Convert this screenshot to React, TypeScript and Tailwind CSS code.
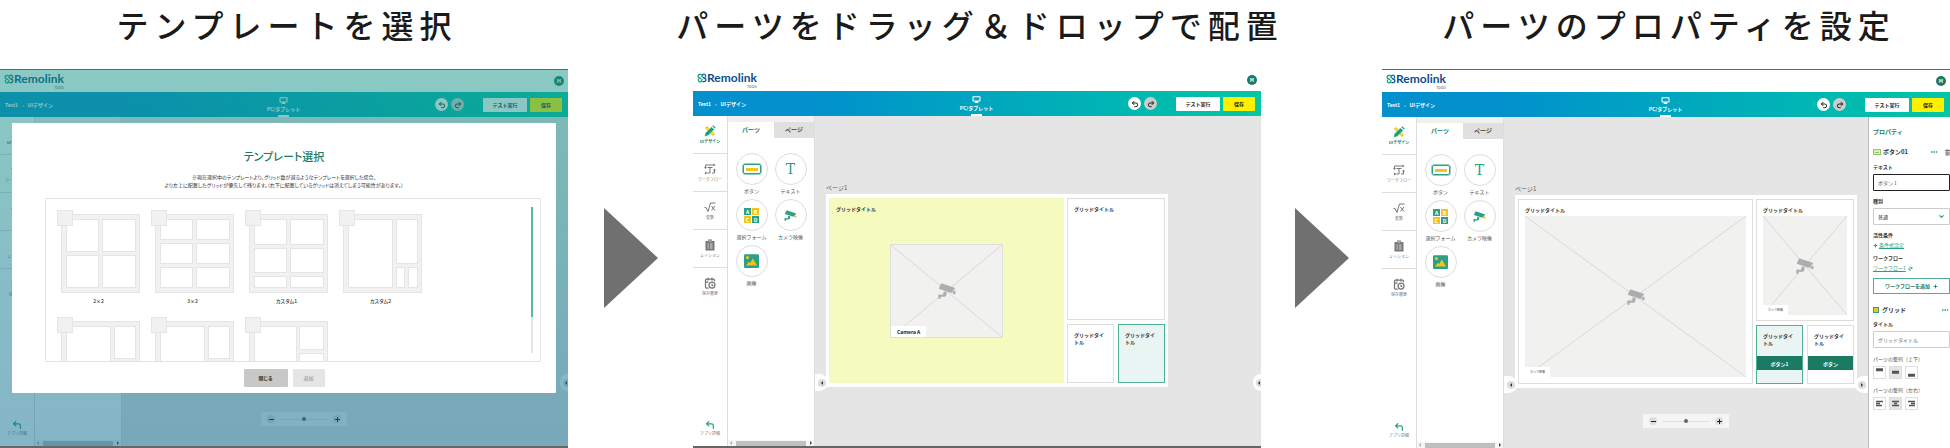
import type { ReactNode } from 'react'
import { CalendarClock, ChevronDown, CornerUpLeft, Ellipsis, Plus, Redo2, Undo2 } from 'lucide-react'

function LogoMark() {
  return (
    <svg viewBox="0 0 24 24" className="h-[10px] w-[10px]" fill="none" strokeWidth="3.2" strokeLinecap="round">
      <path d="M10 3.5H6.5a4 4 0 0 0-3 6.5L9 13.5" stroke="#12a07c" />
      <path d="M3.5 15v2.5a4 4 0 0 0 6.5 3l2-5" stroke="#12a07c" />
      <path d="M14 20.5h3.5a4 4 0 0 0 3-6.5L15 10.5" stroke="#0b4f9c" />
      <path d="M20.5 9V6.5a4 4 0 0 0-6.5-3l-2 5" stroke="#0c6a96" />
    </svg>
  )
}

function CameraIcon({ className, lens = 'currentColor' }: { className: string; lens?: string }) {
  return (
    <svg viewBox="0 0 56 50" className={className} fill="currentColor">
      <path d="M10 1 54 16 42 31 2 18z" />
      <path d="m46 29 4-6 5 4-1 9-9-3z" fill={lens} />
      <path d="m18 26 10 4-3 9q-1 4-5 4H8v6H1V36h7v1h8z" />
    </svg>
  )
}

function MonitorIcon() {
  return (
    <svg viewBox="0 0 24 20" className="h-[7px] w-[9px]" fill="none" stroke="white" strokeWidth="3">
      <rect x="2" y="2" width="20" height="12" rx="1" />
      <path d="M7 18h10M12 14v4" strokeWidth="4" />
    </svg>
  )
}

function DesignIcon() {
  return (
    <svg viewBox="0 0 24 24" className="h-3 w-3">
      <path d="m2 6 4-4 16 16-4 4z" fill="#f2c41c" />
      <path d="m6 8 2-2M16 18l2-2M9 11l1-1" stroke="white" strokeWidth="1.4" />
      <path d="m1 23 1.5-7L15 3.5l5.5 5.5L8 21.5z" fill="#1f9f78" stroke="white" strokeWidth="1" />
      <path d="m16.5 2 2-1.5 5 5-1.5 2z" fill="#1f9f78" />
    </svg>
  )
}

function FlowIcon() {
  return (
    <svg viewBox="0 0 24 24" className="h-3 w-3" fill="none" stroke="currentColor" strokeWidth="2">
      <path d="M3 9V4h17M7 9h10M12 9v11M7 20h5M16 20h5v-6" />
      <path d="m19 1 4 3-4 3zM0 8h6l-3 4zM2 17l5 3-5 3zM18 15h6l-3-4z" fill="currentColor" strokeWidth="0" />
    </svg>
  )
}

function RootIcon() {
  return (
    <svg viewBox="0 0 24 24" className="h-3 w-3" fill="none" stroke="currentColor" strokeWidth="2">
      <path d="M1 13h3l4 8 5-17h10" />
      <path d="m15 10 7 9M22 10l-7 9" />
    </svg>
  )
}

function ClipboardIcon() {
  return (
    <svg viewBox="0 0 24 24" className="h-3 w-3" fill="currentColor">
      <path d="M4 4h4V1h8v3h4q1 0 1 1v17q0 1-1 1H4q-1 0-1-1V5q0-1 1-1z" />
      <path d="M9 4h6M7 10h3M12 10h5M7 14h3M12 14h5M7 18h3M12 18h5" stroke="white" strokeWidth="1.5" />
    </svg>
  )
}

function TrashIcon() {
  return (
    <svg viewBox="0 0 10 12" className="h-[7px] w-[5px]" fill="#777">
      <path d="M0 1h3V0h4v1h3v2H0zM1 4h8v8H1z" />
      <path d="M3.5 5v6M6.5 5v6" stroke="white" strokeWidth="0.8" />
    </svg>
  )
}

function ButtonIcon() {
  return (
    <span className="flex h-[10px] w-[18px] items-center justify-center rounded-[2px] border border-[#2ba084] outline outline-[#2ba084]/50">
      <span className="h-[3px] w-3 bg-[#f2c41c]" />
    </span>
  )
}

function ChoiceIcon() {
  return (
    <span className="grid grid-cols-2 gap-[1px] text-center text-[5px] leading-[7px] font-bold text-white">
      <span className="h-[7px] w-[7px] bg-[#2ba084]">A</span>
      <span className="h-[7px] w-[7px] bg-[#f2c41c]">B</span>
      <span className="h-[7px] w-[7px] bg-[#f2c41c]">C</span>
      <span className="h-[7px] w-[7px] bg-[#2ba084]">D</span>
    </span>
  )
}

function ImageIcon() {
  return (
    <svg viewBox="0 0 24 22" className="h-[14px] w-[15px]">
      <rect width="24" height="22" rx="2" fill="#2ba084" />
      <circle cx="5.5" cy="5.5" r="2.5" fill="#f2c41c" />
      <path d="m3 18 5-6 2 2 4-7 7 11z" fill="#f2c41c" />
    </svg>
  )
}

const navItems = [
  { label: 'UIデザイン', icon: <DesignIcon />, active: true },
  { label: 'ワークフロー', icon: <FlowIcon /> },
  { label: '変数', icon: <RootIcon /> },
  { label: 'ミッション', icon: <ClipboardIcon /> },
  { label: '保存履歴', icon: <CalendarClock className="h-3 w-3" strokeWidth={2.5} /> },
]

const parts = [
  { label: 'ボタン', icon: <ButtonIcon /> },
  { label: 'テキスト', icon: <span className="font-['DejaVu_Serif',serif] text-[14px] leading-4 text-[#2ba084]">T</span> },
  { label: '選択フォーム', icon: <ChoiceIcon /> },
  { label: 'カメラ映像', icon: <CameraIcon className="h-[11px] w-[13px] text-[#2ba084]" lens="#f2c41c" /> },
  { label: '画像', icon: <ImageIcon /> },
]

function TopBar() {
  return (
    <>
      <header className="flex h-[22px] shrink-0 items-center justify-between bg-white px-1">
        <div className="flex flex-col items-end">
          <div className="flex items-center">
            <LogoMark />
            <span className="font-[Lato,sans-serif] text-[12px] leading-3 font-bold text-[#0c4f8c]">Remolink</span>
          </div>
          <span className="text-[4px] leading-1 text-gray-500">Tools</span>
        </div>
        <span className="flex h-[10px] w-[10px] items-center justify-center rounded-full bg-[#1b7a62] text-[5px] font-bold text-white">M</span>
      </header>
      <div className="grid h-[25px] shrink-0 grid-cols-[1fr_auto_1fr] items-center bg-linear-to-r from-[#0490cd] from-20% to-[#06c6a3] pr-[6px] pl-[5px] text-[5px] leading-[6px] font-bold text-white">
        <nav className="flex gap-1">
          <a href="#">Test1</a>
          <span className="font-normal">›</span>
          <a href="#">UIデザイン</a>
        </nav>
        <button className="flex h-full flex-col items-center pt-[5px]">
          <MonitorIcon />
          <span className="mt-[2px]">PC/タブレット</span>
          <span className="mt-auto h-[2px] w-[11px] bg-white" />
        </button>
        <div className="flex items-center justify-end text-[#222]">
          <button aria-label="元に戻す" className="flex h-[13px] w-[13px] items-center justify-center rounded-full bg-white">
            <Undo2 className="h-2 w-2" strokeWidth={3} />
          </button>
          <button aria-label="やり直す" className="ml-[3px] flex h-[13px] w-[13px] items-center justify-center rounded-full bg-[#ccc]">
            <Redo2 className="h-2 w-2" strokeWidth={3} />
          </button>
          <button className="ml-[19px] h-[14px] w-11 rounded-[1px] bg-white">テスト実行</button>
          <button className="ml-[3px] h-[14px] w-8 rounded-[1px] bg-[#fff000]">保存</button>
        </div>
      </div>
    </>
  )
}

function SideNav() {
  return (
    <nav className="flex w-[35px] shrink-0 flex-col border-r border-[#ddd] bg-white text-[4px] leading-[6px] text-[#777]">
      {navItems.map(item => (
        <a
          key={item.label}
          href="#"
          className={`flex h-[38px] flex-col items-center gap-[1px] border-b border-[#ddd] pt-[9px] last-of-type:border-0 ${item.active ? 'font-bold text-[#1b7a62]' : ''}`}
        >
          {item.icon}
          <span>{item.label}</span>
        </a>
      ))}
      <button className="mt-auto flex flex-col items-center pb-[10px]">
        <CornerUpLeft className="h-[10px] w-[10px] text-[#2ba084]" strokeWidth={3} />
        <span>アプリ詳細</span>
      </button>
    </nav>
  )
}

function PartsPanel() {
  return (
    <aside className="flex w-[87px] shrink-0 flex-col border-r border-[#ddd] bg-white">
      <div className="grid grid-cols-[46px_1fr] bg-[#f0f0f0] pt-[6px] text-[6px] leading-4 font-bold">
        <button className="bg-white text-[#1b7a62]">パーツ</button>
        <button className="bg-[#e0e0e0] text-[#444]">ページ</button>
      </div>
      <div className="grid grid-cols-2 gap-y-[5px] px-1 pt-[15px] text-[5px] leading-[6px] text-[#555]">
        {parts.map(part => (
          <button key={part.label} className="flex flex-col items-center gap-[3px] whitespace-nowrap">
            <span className="flex h-8 w-8 items-center justify-center rounded-full border border-[#ddd]">{part.icon}</span>
            <span>{part.label}</span>
          </button>
        ))}
      </div>
      <div className="mt-auto flex h-[6px] items-center justify-between gap-1 bg-[#f5f5f5] px-[2px]">
        <span className="border-y-2 border-r-2 border-y-transparent border-r-[#aaa]" />
        <span className="h-[5px] flex-1 bg-[#bfbfbf]" />
        <span className="border-y-2 border-l-2 border-y-transparent border-l-[#444]" />
      </div>
    </aside>
  )
}

function LeftHandle() {
  return (
    <button aria-label="パーツを閉じる" className="absolute bottom-[55px] left-0 flex h-[17px] w-[13px] items-center justify-center rounded-r-full bg-white">
      <span className="flex h-2 w-2 items-center justify-center rounded-full bg-[#ddd]">
        <span className="border-y-2 border-r-2 border-y-transparent border-r-[#333]" />
      </span>
    </button>
  )
}

function RightHandle({ open }: { open?: boolean }) {
  return (
    <button
      aria-label="プロパティを開閉"
      className={`absolute right-0 bottom-[55px] flex h-[17px] items-center rounded-l-full bg-white ${open ? 'w-[13px] justify-center' : 'w-2 justify-end'}`}
    >
      <span className={`flex h-2 items-center justify-center bg-[#ddd] ${open ? 'w-2 rounded-full' : 'w-[5px] rounded-l-full'}`}>
        <span
          className={open ? 'border-y-2 border-l-2 border-y-transparent border-l-[#333]' : 'border-y-2 border-r-2 border-y-transparent border-r-[#333]'}
        />
      </span>
    </button>
  )
}

function ZoomControl() {
  return (
    <div className="absolute bottom-5 left-[139px] flex h-[14px] w-[86px] items-center justify-between bg-[#f5f5f5] px-[6px] text-[#222]">
      <button aria-label="縮小" className="flex h-2 w-2 items-center justify-center rounded-full bg-[#ddd]">
        <span className="h-[1px] w-[5px] bg-[#222]" />
      </button>
      <input
        type="range"
        aria-label="拡大率"
        defaultValue={50}
        className="h-[1px] w-12 appearance-none bg-[#e2e2e2] [&::-webkit-slider-thumb]:h-1 [&::-webkit-slider-thumb]:w-1 [&::-webkit-slider-thumb]:appearance-none [&::-webkit-slider-thumb]:rounded-full [&::-webkit-slider-thumb]:bg-[#666]"
      />
      <button aria-label="拡大" className="flex h-2 w-2 items-center justify-center rounded-full bg-[#ddd]">
        <svg viewBox="0 0 5 5" className="h-[5px] w-[5px]" stroke="#222">
          <path d="M2.5 0v5M0 2.5h5" />
        </svg>
      </button>
    </div>
  )
}

type EditorProps = {
  frame: string
  canvas?: ReactNode
  zoom?: boolean
  properties?: ReactNode
  children?: ReactNode
}

function Editor({ frame, canvas, zoom, properties, children }: EditorProps) {
  return (
    <section className={`relative flex flex-1 flex-col overflow-hidden border-[#666] ${frame}`}>
      <TopBar />
      <div className="flex flex-1">
        <SideNav />
        <PartsPanel />
        <main className="relative min-w-0 flex-1 bg-[#e5e5e5] px-[11px] pt-[68px]">
          {canvas}
          <LeftHandle />
          <RightHandle open={!!properties} />
          {zoom && <ZoomControl />}
        </main>
        {properties}
      </div>
      {children}
    </section>
  )
}

function Placeholder({ className, label }: { className: string; label: ReactNode }) {
  return (
    <div className={`relative flex items-center justify-center bg-[#f1f1f0] ${className}`}>
      <svg viewBox="0 0 100 100" preserveAspectRatio="none" className="absolute inset-0 h-full w-full" stroke="#d8d8d8">
        <path d="M0 0 100 100M100 0 0 100" vectorEffect="non-scaling-stroke" />
      </svg>
      <CameraIcon className="relative h-4 w-[18px] text-[#adadad]" />
      {label}
    </div>
  )
}

function Cell({ className = 'border-[#ddd] bg-white', children }: { className?: string; children?: ReactNode }) {
  return (
    <div className={`flex flex-col border p-[6px] ${className}`}>
      <p>グリッドタイトル</p>
      {children}
    </div>
  )
}

function Page({ children }: { children: ReactNode }) {
  return (
    <>
      <p className="text-[6px] leading-[8px] text-[#555]">ページ1</p>
      <div className="mt-[2px] grid h-[193px] w-[342px] max-w-full grid-cols-[235px_1fr] gap-[3px] bg-white px-[3px] py-1 text-[5px] leading-[7px] font-bold text-[#333]">
        {children}
      </div>
    </>
  )
}

function DragPage() {
  return (
    <Page>
      <div className="relative flex items-center justify-center bg-[#f5fbbf]">
        <p className="absolute top-[7px] left-[7px]">グリッドタイトル</p>
        <Placeholder
          className="h-[94px] w-[113px] border border-[#dededa]"
          label={<span className="absolute bottom-0 left-0 bg-white px-[6px] py-[2px] text-[#222]">Camera A</span>}
        />
      </div>
      <div className="grid grid-cols-2 grid-rows-[1fr_59px] gap-1">
        <div className="col-span-2 grid">
          <Cell />
        </div>
        <Cell />
        <Cell className="border-[#4fb094] bg-[#e8f5f3]" />
      </div>
    </Page>
  )
}

function CameraLabel() {
  return <span className="absolute bottom-0 left-0 bg-white px-[5px] py-[2px] text-[3px] leading-[6px] font-normal text-[#555]">カメラ映像</span>
}

function PropertyPage() {
  return (
    <Page>
      <Cell>
        <Placeholder className="mt-[3px] flex-1" label={<CameraLabel />} />
      </Cell>
      <div className="grid grid-cols-2 grid-rows-[1fr_59px] gap-1">
        <div className="col-span-2 grid">
          <Cell>
            <Placeholder className="mt-[3px] mb-[-1px] flex-1" label={<CameraLabel />} />
          </Cell>
        </div>
        <Cell className="border-[#4fb094] bg-[#e8f5f3]">
          <button className="-mx-[6px] mt-[10px] h-[14px] bg-[#1b7a62] text-white">ボタン1</button>
        </Cell>
        <Cell>
          <button className="-mx-[6px] mt-[10px] h-[14px] bg-[#1b7a62] text-white">ボタン</button>
        </Cell>
      </div>
    </Page>
  )
}

function AlignButtons({ label, paths }: { label: string; paths: string[] }) {
  return (
    <div className="flex flex-col gap-1 whitespace-nowrap">
      <p className="text-[#555]">{label}</p>
      <div className="flex gap-[3px]">
        {paths.map((d, i) => (
          <button
            key={d}
            aria-label={`${label} ${i + 1}`}
            className={`flex h-[13px] w-[13px] items-center justify-center border border-[#ddd] ${i === 1 ? 'bg-[#e5e5e5]' : 'bg-white'}`}
          >
            <svg viewBox="0 0 9 9" className="h-[9px] w-[9px]" stroke="#555" strokeWidth="1.4">
              <path d={d} />
            </svg>
          </button>
        ))}
      </div>
    </div>
  )
}

function Properties() {
  return (
    <aside className="flex w-[82px] shrink-0 flex-col border-l border-[#bbb] bg-white pt-[11px] pl-1 text-[5px] leading-[6px] text-[#333]">
      <h2 className="text-[6px] leading-[8px] font-bold text-[#1b7a62]">プロパティ</h2>
      <div className="mt-3 flex items-center gap-[2px]">
        <span className="flex h-[6px] w-2 items-center justify-center border border-[#8cc76a] bg-[#e4f0b0]">
          <span className="h-[1px] w-1 bg-[#8cc76a]" />
        </span>
        <h3 className="text-[6px] leading-[8px] font-bold">ボタン01</h3>
        <button aria-label="ボタン01のメニュー" className="ml-auto text-[#2ba084]">
          <Ellipsis className="h-2 w-2" strokeWidth={3} />
        </button>
        <button aria-label="削除" className="ml-[5px]">
          <TrashIcon />
        </button>
      </div>
      <div className="mt-2 flex flex-col gap-[7px]">
        <label className="flex flex-col gap-1 font-bold">
          テキスト
          <input defaultValue="ボタン 1" className="h-[17px] w-full rounded-[1px] border border-[#222] px-1 font-normal text-[#555]" />
        </label>
        <label className="relative flex flex-col gap-1 font-bold">
          種別
          <select className="h-[17px] w-full appearance-none rounded-[1px] border border-[#ccc] px-1 font-normal">
            <option>普通</option>
          </select>
          <ChevronDown className="absolute right-[5px] bottom-[5px] h-[7px] w-[7px] text-[#2ba084]" strokeWidth={4} />
        </label>
        <div className="flex flex-col gap-1">
          <p className="font-bold">活性条件</p>
          <p className="flex items-center gap-[1px] text-[#2ba084]">
            <Plus className="h-[5px] w-[5px]" strokeWidth={5} />
            <a href="#" className="underline">条件式設定</a>
          </p>
        </div>
        <div className="flex flex-col gap-1">
          <p className="font-bold">ワークフロー</p>
          <p className="flex items-center gap-[2px] text-[#2ba084]">
            <a href="#" className="underline">ワークフロー1</a>
            <Redo2 className="h-[5px] w-[5px]" strokeWidth={4} />
          </p>
        </div>
        <button className="flex h-4 items-center justify-center gap-[3px] border border-[#4fb094] font-bold text-[#1b7a62]">
          ワークフローを追加
          <Plus className="h-[5px] w-[5px]" strokeWidth={4} />
        </button>
      </div>
      <div className="mt-3 flex items-center gap-[3px] pr-[1px]">
        <span className="h-[6px] w-[6px] border border-[#2ba084] bg-[#f2c41c]" />
        <h3 className="text-[6px] leading-[8px] font-bold">グリッド</h3>
        <button aria-label="グリッドのメニュー" className="ml-auto text-[#2ba084]">
          <Ellipsis className="h-2 w-2" strokeWidth={3} />
        </button>
      </div>
      <div className="mt-[7px] flex flex-col gap-2">
        <label className="flex flex-col gap-1 font-bold">
          タイトル
          <input placeholder="グリッドタイトル" className="h-[17px] w-full rounded-[1px] border border-[#ccc] px-1 font-normal placeholder:text-[#666]" />
        </label>
        <AlignButtons label="パーツの整列（上下）" paths={['M1 1h7M1 2.5h7', 'M1 3.5h7M1 5h7', 'M1 6.5h7M1 8h7']} />
        <AlignButtons
          label="パーツの整列（左右）"
          paths={['M1 2.5h7M1 4.5h4M1 6.5h6', 'M1 2.5h7M3 4.5h3M1 6.5h7', 'M1 2.5h7M4 4.5h4M2 6.5h6']}
        />
      </div>
    </aside>
  )
}

// each cell is [x, y, width, height] inside the 83px thumbnail
type Rect = [number, number, number, number]

const templates: { id: number; name?: string; cells: Rect[] }[] = [
  { id: 1, name: '2×2', cells: [[9, 9, 32, 32], [45, 9, 33, 32], [9, 45, 32, 32], [45, 45, 33, 32]] },
  { id: 2, name: '3×2', cells: [[9, 9, 32, 20], [45, 9, 33, 20], [9, 33, 32, 20], [45, 33, 33, 20], [9, 57, 32, 20], [45, 57, 33, 20]] },
  { id: 3, name: 'カスタム1', cells: [[9, 9, 32, 25], [45, 9, 33, 25], [9, 38, 32, 24], [45, 38, 33, 24], [9, 66, 32, 11], [45, 66, 33, 11]] },
  { id: 4, name: 'カスタム2', cells: [[9, 9, 44, 68], [57, 9, 21, 44], [57, 57, 8, 20], [69, 57, 9, 20]] },
  { id: 5, cells: [[9, 9, 44, 68], [57, 9, 21, 32], [57, 45, 21, 32]] },
  { id: 6, cells: [[9, 9, 44, 68], [57, 9, 21, 32], [57, 45, 21, 32]] },
  { id: 7, cells: [[9, 9, 42, 68], [54, 9, 24, 23], [54, 36, 24, 41]] },
]

function TemplateModal() {
  return (
    <div className="absolute inset-0 flex bg-linear-to-b from-[#179387]/50 to-[#0b6b8f]/50 px-3 py-[53px]">
      <div role="dialog" aria-label="テンプレート選択" className="flex flex-1 flex-col rounded-[1px] bg-white pt-[25px] pb-[6px] text-center [font-feature-settings:'palt']">
        <h2 className="text-[11px] leading-4 font-medium text-[#1b7a62]">テンプレート選択</h2>
        <p className="mt-[9px] text-[5px] leading-[8px] text-[#333]">
          ※現在選択中のテンプレートより、グリッド数が減るようなテンプレートを選択した場合、
          <br />
          より左上に配置したグリッドが優先して残ります。（右下に配置しているグリッドは消えてしまう可能性があります。）
        </p>
        <div className="mt-[9px] mr-[15px] ml-[33px] flex min-h-0 flex-1 justify-between overflow-hidden rounded-[1px] border border-[#e2e2e2] pr-[7px] pl-[11px]">
          <div className="grid h-fit grid-cols-4 gap-x-[11px] gap-y-3 pt-[11px]">
            {templates.map(t => (
              <button key={t.id} aria-label={t.name ?? `テンプレート${t.id}`} className="flex flex-col items-center gap-1">
                <svg viewBox="0 0 83 83" className="h-[83px] w-[83px]" fill="#f1f1f1" stroke="#e5e5e5">
                  <rect x="4.5" y="4.5" width="78" height="78" />
                  {t.cells.map(([x, y, w, h]) => (
                    <rect key={`${x}-${y}`} x={x + 0.5} y={y + 0.5} width={w} height={h} fill="white" />
                  ))}
                  <rect x="0.5" y="0.5" width="15" height="15" />
                </svg>
                {t.name && <span className="text-[5px] leading-[8px] font-medium text-[#333]">{t.name}</span>}
              </button>
            ))}
          </div>
          <div className="my-2 w-[2px] bg-[#e5e5e5]">
            <div className="h-3/4 bg-[#5cb8a0]" />
          </div>
        </div>
        <div className="mt-[7px] flex justify-center gap-[5px] text-[5px] font-bold">
          <button className="h-[18px] w-11 rounded-[1px] bg-[#c8c8c8] text-[#333]">閉じる</button>
          <button disabled className="h-[18px] w-8 rounded-[1px] bg-[#e5e5e5] text-[#aaa]">追加</button>
        </div>
      </div>
    </div>
  )
}

function Step({ title, children }: { title: string; children: ReactNode }) {
  return (
    <div className="flex min-w-0 flex-col">
      <h1 className="flex h-[69px] shrink-0 justify-center pl-[6px] text-[32px] leading-[48px] font-medium tracking-[6px] whitespace-nowrap text-[#1a1a1a]">{title}</h1>
      {children}
    </div>
  )
}

function Arrow() {
  return (
    <div className="flex items-center justify-center pt-[68px]">
      <svg viewBox="0 0 54 100" className="h-[100px] w-[54px]" fill="#707070">
        <path d="M0 0 54 50 0 100z" />
      </svg>
    </div>
  )
}

export default function App() {
  return (
    <div className="grid min-h-screen grid-cols-[1fr_125px_1fr_121px_1fr] overflow-hidden bg-white font-['Noto_Sans_CJK_JP',sans-serif]">
      <Step title="テンプレートを選択">
        <Editor frame="border-t border-b-2" zoom>
          <TemplateModal />
        </Editor>
      </Step>
      <Arrow />
      <Step title="パーツをドラッグ＆ドロップで配置">
        <Editor frame="border-b-2" canvas={<DragPage />} />
      </Step>
      <Arrow />
      <Step title="パーツのプロパティを設定">
        <Editor frame="border-t" canvas={<PropertyPage />} zoom properties={<Properties />} />
      </Step>
    </div>
  )
}
